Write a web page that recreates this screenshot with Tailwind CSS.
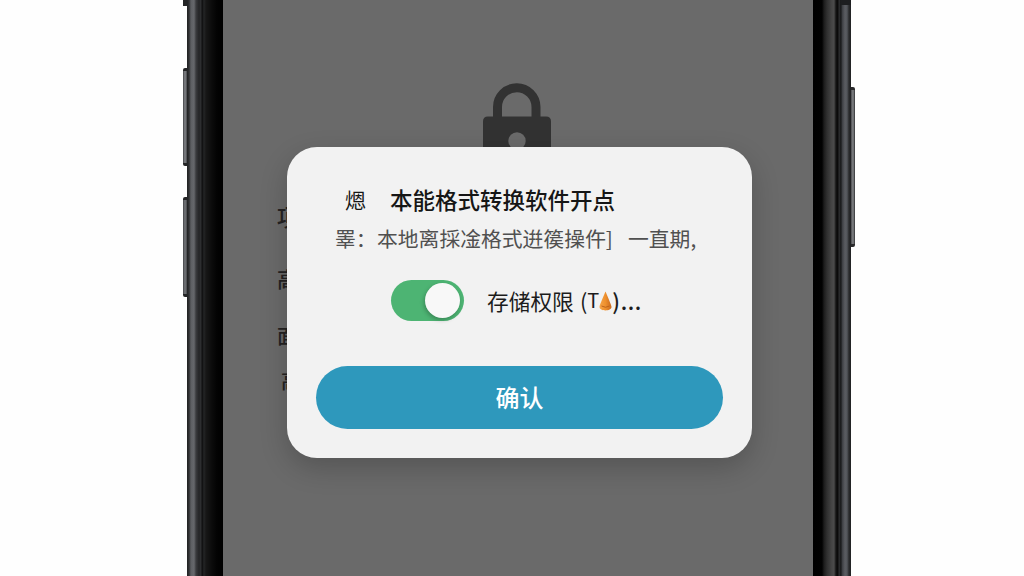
<!DOCTYPE html>
<html lang="zh-CN">
    <head>
        <meta charset="UTF-8" />
        <meta name="viewport" content="width=device-width, initial-scale=1.0" />
        <title>存储权限</title>
        <script src="https://cdn.jsdelivr.net/npm/@tailwindcss/browser@4"></script>
    </head>
    <body
        class="bg-[#fefefe] overflow-hidden font-['Noto_Sans_CJK_SC','Noto_Sans',sans-serif]"
    >
        <div class="flex w-[1024px] h-[576px] pl-[183px]">
            <!-- left side buttons -->
            <div class="flex flex-col w-1 shrink-0">
                <div class="h-[6px] bg-[#242526]"></div>
                <div
                    class="mt-[62px] h-[98px] rounded-l-xs border-y-3 border-[#242526] bg-linear-to-r from-[#444548] via-[#85878b] to-[#48494c]"
                ></div>
                <div
                    class="mt-[31px] h-[100px] rounded-l-xs border-y-3 border-[#242526] bg-linear-to-r from-[#444548] via-[#77797d] to-[#48494c]"
                ></div>
            </div>
            <!-- left frame -->
            <div
                class="w-9 shrink-0 bg-[linear-gradient(90deg,#202122_0px,#303133_2px,#5d5f63_4px,#66686c_7px,#3a3b3e_9px,#242527_12px,#303133_14px,#0c0c0d_15px,#242526_17px,#171717_19px,#0b0b0b_25px,#030303_30px,#000_36px)]"
            ></div>
            <!-- screen -->
            <div class="relative w-[590px] shrink-0 bg-[#6a6a6a] overflow-hidden">
                <svg
                    class="mt-[83px] ml-[260px] w-[68px] h-[80px]"
                    viewBox="0 0 68 80"
                    fill="none"
                >
                    <path
                        d="M14.5 40V24a19.2 19.2 0 0 1 38.5 0V40"
                        stroke="#323232"
                        stroke-width="9"
                    />
                    <path
                        d="M5 33.500H63Q68 33.500 68 38.500V80H0V38.500Q0 33.500 5 33.500Z"
                        fill="#323232"
                    />
                    <circle cx="34" cy="58" r="8.700" fill="#6a6a6a" />
                </svg>
                <!-- page text behind the dialog -->
                <div
                    class="absolute left-[54px] top-[205px] flex flex-col text-[#242222] leading-none font-medium"
                >
                    <span class="text-[23px] h-[63px]">项</span>
                    <span class="text-[21px] h-[58px]">高</span>
                    <span class="text-[20px] h-[45px]">面</span>
                    <span class="text-[20px] pl-1">高</span>
                </div>
                <!-- dialog -->
                <div
                    class="absolute left-[64px] top-[147px] w-[465px] h-[311px] rounded-[30px] bg-[#f2f2f2] shadow-[0_10px_28px_rgba(0,0,0,0.2)] pl-[29px] pr-7 pt-[34px]"
                >
                    <h2
                        class="flex gap-6 pl-[29px] h-[38px] text-[22.500px] leading-9 font-medium text-[#161616] whitespace-nowrap"
                    >
                        <span class="w-[21px] text-[21px] font-normal">煾</span>
                        <span>本能格式转换软件开点</span>
                    </h2>
                    <p
                        class="flex pl-[19px] h-[38px] text-[20.800px] leading-[38px] text-[#505050] whitespace-nowrap"
                    >
                        <span class="w-[42px]">睪：</span>
                        <span class="w-[251px]">本地离採凎格式逬篌操仵]</span>
                        <span>一直期,</span>
                    </p>
                    <div class="flex items-center mt-[23px] pl-[75px]">
                        <div
                            class="flex items-center justify-end w-[73px] h-[41px] pr-1 rounded-full bg-[#4db473] shrink-0"
                        >
                            <div
                                class="size-[35px] rounded-full bg-[#f8f8f8] shadow-[-1px_2px_4px_rgba(0,0,0,0.25)]"
                            ></div>
                        </div>
                        <div
                            class="flex items-center ml-[23px] text-[21.700px] leading-[39px] h-[41px] text-[#1c1c1c] whitespace-nowrap"
                        >
                            <span class="w-[93px]">存储权限</span>
                            <span>(</span>
                            <span class="text-[20px] -mt-0.5">T</span>
                            <svg class="w-[13px] h-5" viewBox="0 0 13 20">
                                <defs>
                                    <linearGradient id="cone">
                                        <stop offset="0" stop-color="#f6a548" />
                                        <stop offset="0.500" stop-color="#ee902e" />
                                        <stop offset="1" stop-color="#c9691c" />
                                    </linearGradient>
                                </defs>
                                <path
                                    d="M6.500 0.500C7.500 3 12.500 14 12.500 16C12.500 20.500 0.500 20.500 0.500 16C0.500 14 5.500 3 6.500 0.500Z"
                                    fill="url(#cone)"
                                />
                                <path
                                    d="M2.500 15Q6.500 17.500 10.500 15"
                                    stroke="#bd641c"
                                    fill="none"
                                />
                            </svg>
                            <span class="tracking-[0.6px] font-medium">)...</span>
                        </div>
                    </div>
                    <button
                        class="block mt-[45px] w-[407px] h-[63px] pb-0.5 rounded-full bg-[#2e98bc] text-center text-[24px] leading-[60px] font-medium text-white"
                    >
                        确认
                    </button>
                </div>
            </div>
            <!-- right frame -->
            <div
                class="w-[37.500px] shrink-0 bg-[linear-gradient(90deg,#000_0px,#020202_9px,#1c1c1c_11px,#303030_14px,#464646_19px,#4b4b4b_21px,#141414_23px,#080808_25px,#303133_26px,#151617_28px,#3a3c40_29px,#5a5c61_32px,#53565b_34px,#292a2c_36px,#202123_38px)]"
            >
                <div class="ml-[28px] h-[5px] bg-[#1d1e20]"></div>
            </div>
            <!-- power button -->
            <div
                class="mt-[87px] w-1 h-[160px] shrink-0 rounded-r-xs border-y-3 border-[#29292b] bg-linear-to-r from-[#4a4b4e] via-[#85878a] to-[#303133]"
            ></div>
        </div>
    </body>
</html>
